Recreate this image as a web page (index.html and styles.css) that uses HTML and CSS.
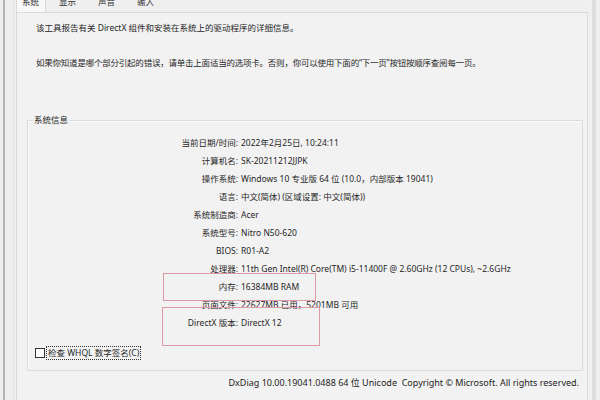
FILE: index.html
```html
<!DOCTYPE html>
<html lang="zh-CN">
<head>
<meta charset="utf-8">
<link rel="stylesheet" href="styles.css">
</head>
<body>
<div class="frame">
  <div class="edge"></div>
  <div class="main">
    <div class="tabs">
      <span class="tab active">系统</span>
      <span class="tab">显示</span>
      <span class="tab">声音</span>
      <span class="tab">输入</span>
    </div>
    <div class="panel">
      <p class="intro">该工具报告有关 DirectX 组件和安装在系统上的驱动程序的详细信息。</p>
      <p class="intro second">如果你知道是哪个部分引起的错误，请单击上面适当的选项卡。否则，你可以使用下面的“下一页”按钮按顺序查阅每一页。</p>
      <div class="group">
        <span class="legend">系统信息</span>
        <div class="rows">
          <span class="k">当前日期/时间:</span><span class="v">2022年2月25日, 10:24:11</span>
          <span class="k">计算机名:</span><span class="v">SK-20211212JJPK</span>
          <span class="k">操作系统:</span><span class="v">Windows 10 专业版 64 位 (10.0，内部版本 19041)</span>
          <span class="k">语言:</span><span class="v">中文(简体) (区域设置: 中文(简体))</span>
          <span class="k">系统制造商:</span><span class="v">Acer</span>
          <span class="k">系统型号:</span><span class="v">Nitro N50-620</span>
          <span class="k">BIOS:</span><span class="v">R01-A2</span>
          <span class="k">处理器:</span><span class="v">11th Gen Intel(R) Core(TM) i5-11400F @ 2.60GHz (12 CPUs), ~2.6GHz</span>
          <span class="k">内存:</span><span class="v">16384MB RAM</span>
          <span class="k">页面文件:</span><span class="v">22627MB 已用，5201MB 可用</span>
          <span class="k">DirectX 版本:</span><span class="v">DirectX 12</span>
        </div>
        <div class="check">
          <span class="box"></span>
          <span class="checklabel">检查 WHQL 数字签名(C)</span>
        </div>
        <div class="mark mark1"></div>
        <div class="mark mark2"></div>
      </div>
      <div class="footer">DxDiag 10.00.19041.0488 64 位 Unicode&nbsp; Copyright © Microsoft. All rights reserved.</div>
    </div>
  </div>
</div>
</body>
</html>
```

FILE: styles.css
```css
html, body {
  margin: 0;
  padding: 0;
  background: #efefef;
}
body {
  width: 600px;
  height: 400px;
  overflow: hidden;
  font-family: "Noto Sans", "Noto Sans CJK SC", sans-serif;
  font-size: 8.5px;
  color: #262626;
}
.frame {
  display: flex;
  height: 400px;
}
.edge {
  width: 8px;
  margin-left: 3px;
  border-left: 2px solid #b4b4b4;
  border-right: 1px solid #e2e2e2;
  flex: none;
}
.main {
  width: 572px;
  margin-left: 2px;
  display: flex;
  flex-direction: column;
  border-right: 4px solid #f0f0f0;
  box-shadow: 4px 0 0 0 #dedede;
}
.tabs {
  height: 12px;
  display: flex;
  align-items: flex-end;
  position: relative;
}
.tab {
  height: 13px;
  line-height: 6px;
  padding: 0 9px 0 0;
  margin-left: 13px;
  color: #333;
}
.tab.active {
  background: #f8f8f8;
  margin-left: 0;
  padding: 0 6px 0 5px;
  border-left: 1px solid #dadada;
  border-right: 1px solid #dadada;
  position: relative;
  z-index: 1;
  height: 13px;
}
.panel {
  flex: 1;
  border: 1px solid #dadada;
  border-bottom: none;
  background: #f2f2f2;
  padding: 9px 4px 0 10px;
}
.intro {
  margin: 0;
  padding-left: 9px;
  line-height: 12px;
}
.second {
  margin-top: 23px;
  letter-spacing: -0.22px;
}
.group {
  position: relative;
  margin-top: 51px;
  border: 1px solid #dcdcdc;
  box-shadow: inset 1px 1px 0 #fafafa;
  padding: 12px 0 9px 0;
}
.legend {
  position: absolute;
  left: 5px;
  top: -7px;
  padding: 0 1px;
  line-height: 12px;
  background: #f2f2f2;
}
.rows {
  display: grid;
  grid-template-columns: 210px auto;
  column-gap: 3px;
  grid-auto-rows: 18px;
  align-items: center;
}
.k {
  text-align: right;
}
.v {
  white-space: nowrap;
}
.check {
  margin-top: 14px;
  height: 16px;
  display: flex;
  align-items: center;
  padding-left: 7px;
}
.box {
  width: 8px;
  height: 8px;
  border: 1px solid #333;
  background: #fff;
  flex: none;
}
.checklabel {
  margin-left: 1px;
  padding: 1px 2px;
  outline: 1px dotted #333;
  outline-offset: -1px;
  line-height: 12px;
}
.mark {
  position: absolute;
  border: 1px solid #dd9aa4;
}
.mark1 {
  left: 135px;
  top: 152px;
  width: 151px;
  height: 26px;
}
.mark2 {
  left: 134px;
  top: 186px;
  width: 156px;
  height: 37px;
}
.footer {
  margin-top: 6px;
  text-align: right;
  padding-right: 4px;
  line-height: 12px;
  font-size: 9px;
  color: #222;
}
```
